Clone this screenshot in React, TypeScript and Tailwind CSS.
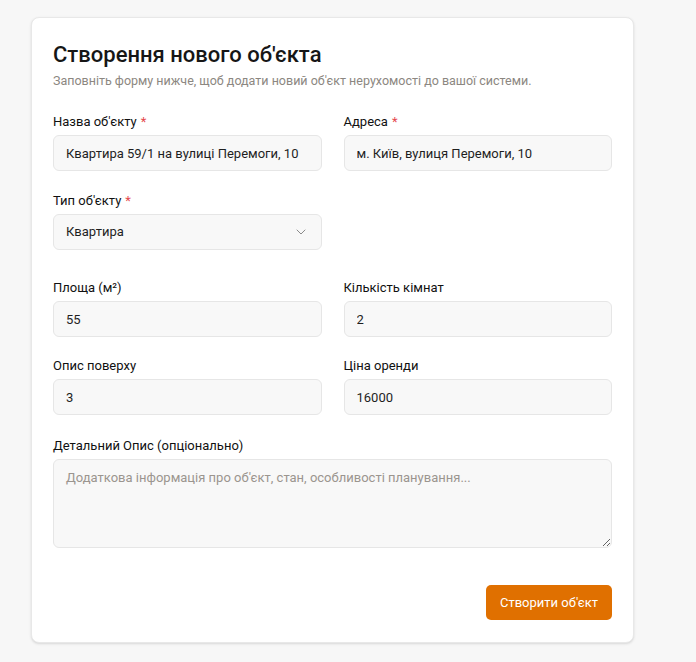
import { ChevronDown } from 'lucide-react';

const font = { fontFamily: 'Roboto, "Noto Sans", sans-serif' };

function Label({ text, required }: { text: string; required?: boolean }) {
  return (
    <label className="mb-1 block text-[13px] leading-[18px] font-normal text-[#111111]">
      {text}
      {required && <span className="ml-1 text-[#e5484d]">*</span>}
    </label>
  );
}

function Field({ label, value, required }: { label: string; value: string; required?: boolean }) {
  return (
    <div>
      <Label text={label} required={required} />
      <input
        defaultValue={value}
        className="h-9 w-full rounded-md border border-[#e6e6e6] bg-[#f8f8f8] px-3 text-[13px] text-[#1f1f1f] outline-none"
      />
    </div>
  );
}

export default function App() {
  return (
    <div className="min-h-[662px] bg-[#f7f7f7] pl-[31px] pt-[17px] text-[#1c1c1c]" style={font}>
      <div className="w-[603px] rounded-lg border border-[#e8e8e8] bg-white px-[21px] pt-[23px] pb-[22px] shadow-sm">
        <h1 className="text-[22px] leading-7 font-medium text-[#161616]">
          Створення нового об'єкта
        </h1>
        <p className="mt-0.5 text-[12.5px] leading-5 text-[#8c8781]">
          Заповніть форму нижче, щоб додати новий об'єкт нерухомості до вашої системи.
        </p>

        <div className="mt-[22px] grid grid-cols-2 gap-x-[22px] gap-y-[21px]">
          <Field label="Назва об'єкту" value="Квартира 59/1 на вулиці Перемоги, 10" required />
          <Field label="Адреса" value="м. Київ, вулиця Перемоги, 10" required />
          <div>
            <Label text="Тип об'єкту" required />
            <div className="flex h-9 w-full items-center justify-between rounded-md border border-[#e6e6e6] bg-[#f8f8f8] px-3 text-[13px] text-[#1f1f1f]">
              <span>Квартира</span>
              <ChevronDown className="h-4 w-4 text-[#8a8a8a]" strokeWidth={1.5} />
            </div>
          </div>
          <div />
        </div>

        <div className="mt-[29px] grid grid-cols-2 gap-x-[22px] gap-y-5">
          <Field label="Площа (м²)" value="55" />
          <Field label="Кількість кімнат" value="2" />
          <Field label="Опис поверху" value="3" />
          <Field label="Ціна оренди" value="16000" />
        </div>

        <div className="mt-[22px]">
          <Label text="Детальний Опис (опціонально)" />
          <textarea
            placeholder="Додаткова інформація про об'єкт, стан, особливості планування..."
            className="block h-[89px] w-full rounded-md border border-[#e6e6e6] bg-[#f8f8f8] px-3 py-2 text-[13px] text-[#1f1f1f] outline-none placeholder:text-[#9b958f]"
          />
        </div>

        <div className="mt-[37px] flex justify-end">
          <button className="h-[35px] w-[126px] rounded-[5px] bg-[#e07000] text-[13px] text-white">
            Створити об'єкт
          </button>
        </div>
      </div>
    </div>
  );
}
